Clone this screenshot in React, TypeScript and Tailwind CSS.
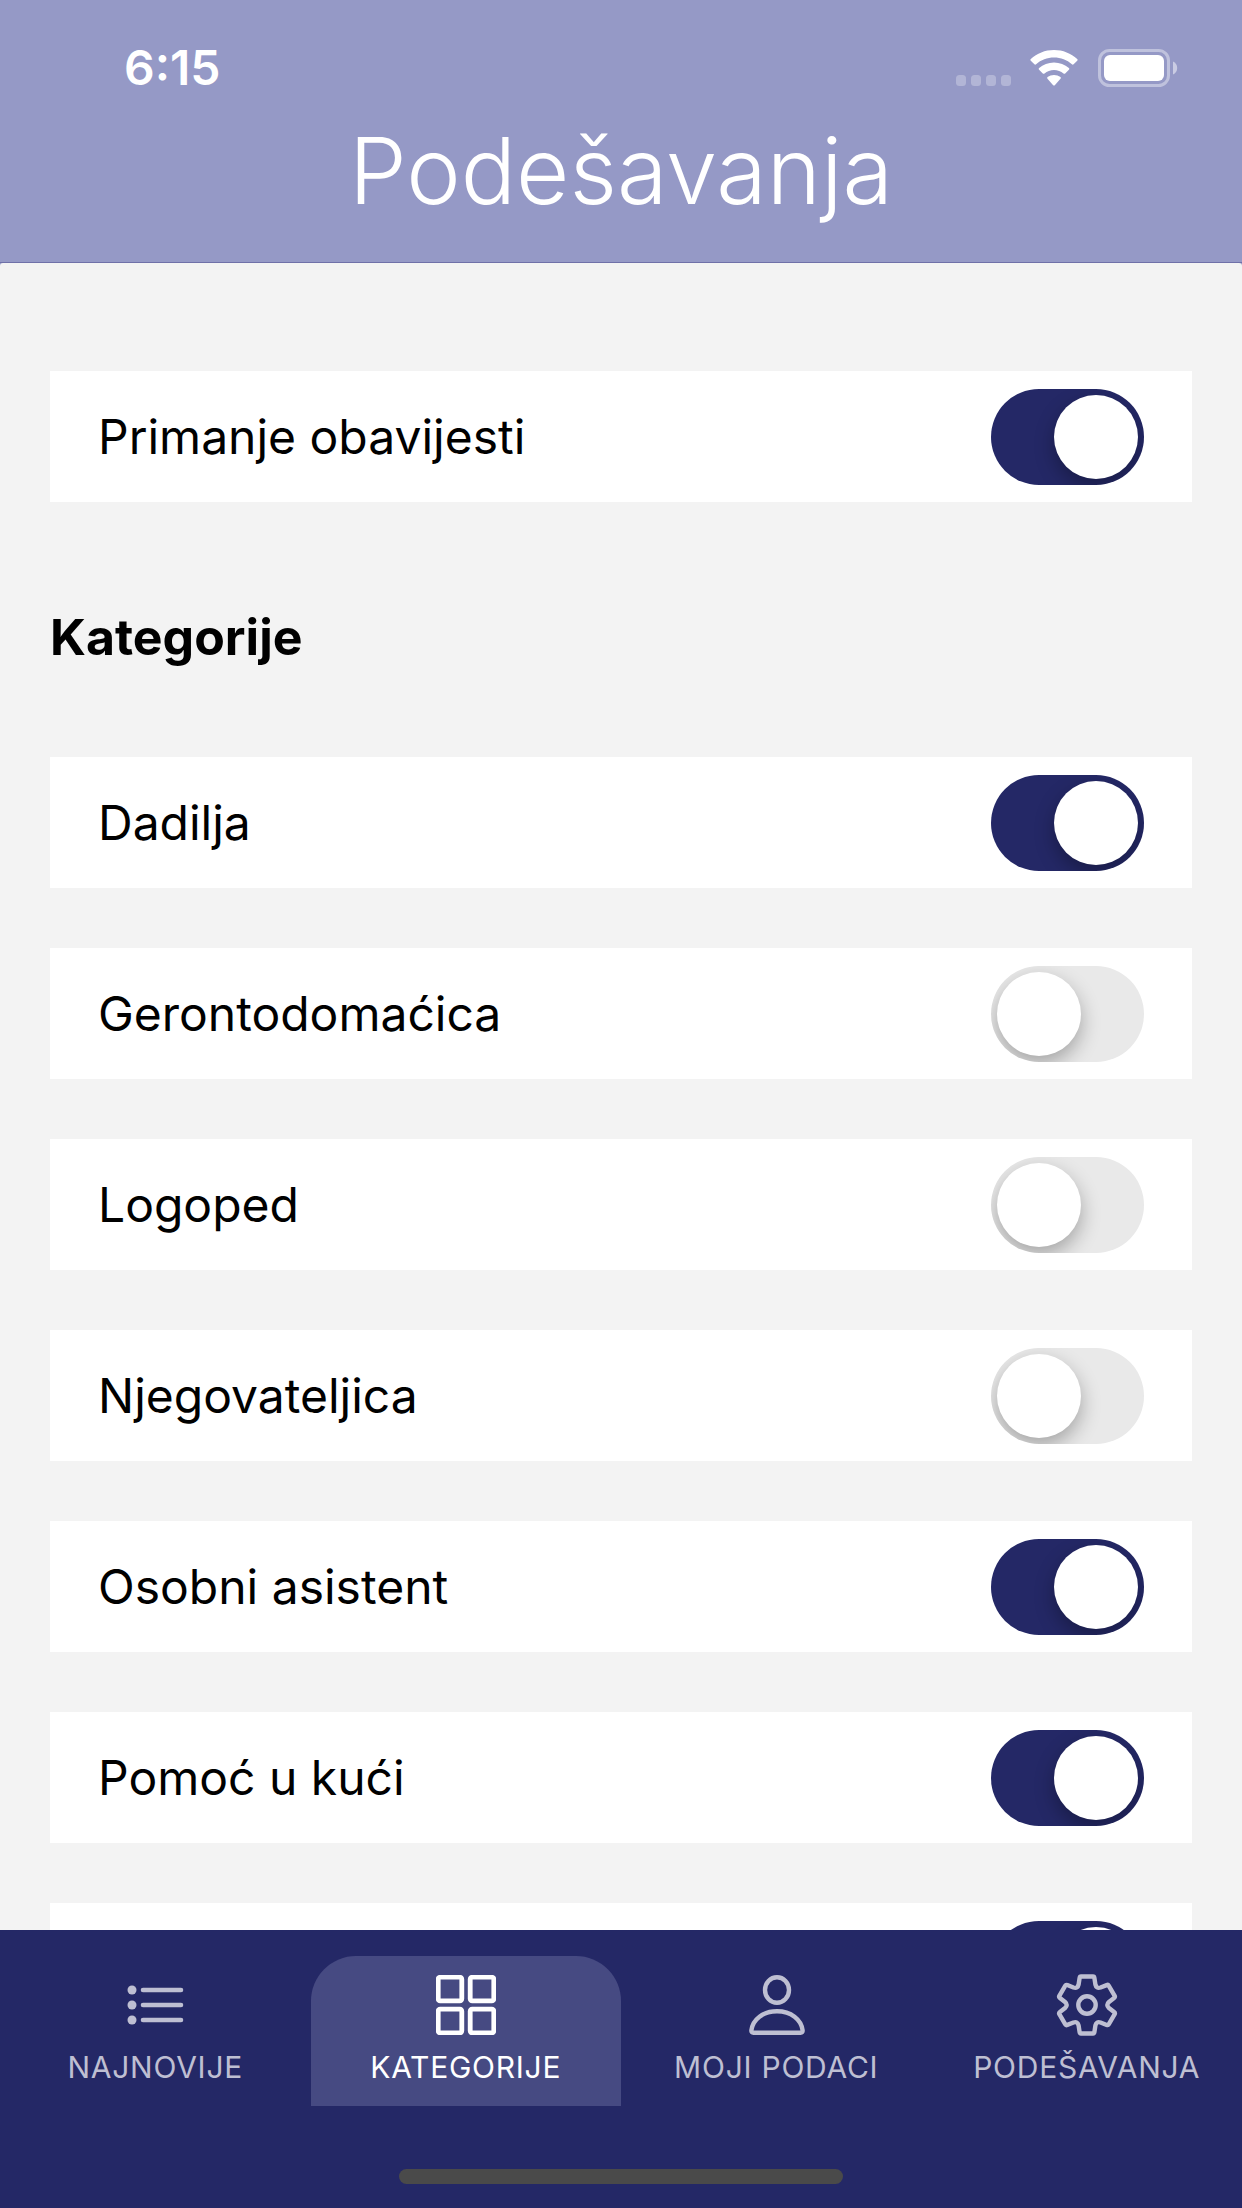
import { useState } from 'react';
import type { ReactNode } from 'react';

interface Category {
  id: string;
  label?: string;
  enabled: boolean;
}

const initialCategories: Category[] = [
  { id: 'dadilja', label: 'Dadilja', enabled: true },
  { id: 'gerontodomacica', label: 'Gerontodomaćica', enabled: false },
  { id: 'logoped', label: 'Logoped', enabled: false },
  { id: 'njegovateljica', label: 'Njegovateljica', enabled: false },
  { id: 'osobni-asistent', label: 'Osobni asistent', enabled: true },
  { id: 'pomoc-u-kuci', label: 'Pomoć u kući', enabled: true },
  { id: 'ostalo', enabled: true },
];

/**
 * Six-toothed gear outline, one tooth rotated around the centre
 */
function gearPath() {
  const point = (x: number, y: number, angle: number) => {
    const a = (angle * Math.PI) / 180;
    const px = 30 + x * Math.cos(a) - y * Math.sin(a);
    const py = 30 + x * Math.sin(a) + y * Math.cos(a);
    return `${px.toFixed(2)} ${py.toFixed(2)}`;
  };
  let d = '';
  for (let angle = 0; angle < 360; angle += 60) {
    d += `${angle === 0 ? 'M' : 'L'}${point(-6, -28.5, angle)}`;
    d += `L${point(6, -28.5, angle)}`;
    d += `Q${point(7.2, -28.5, angle)} ${point(7.4, -27, angle)}`;
    d += `L${point(8.4, -20.5, angle)}`;
    d += `Q${point(9.3, -16.1, angle)} ${point(-8.4, -20.5, angle + 60)}`;
    d += `L${point(-7.4, -27, angle + 60)}`;
    d += `Q${point(-7.2, -28.5, angle + 60)} ${point(-6, -28.5, angle + 60)}`;
  }
  return d + 'Z';
}

function ListIcon() {
  return (
    <svg className="h-[60px] w-[60px]" viewBox="0 0 60 60" fill="none" stroke="currentColor" strokeWidth={4.6} strokeLinecap="round" aria-hidden="true">
      <path d="M18 15h38M18 30h38M18 45h38" />
      <g fill="currentColor" stroke="none">
        <circle cx="7" cy="15" r="4.500" />
        <circle cx="7" cy="30" r="4.500" />
        <circle cx="7" cy="45" r="4.500" />
      </g>
    </svg>
  );
}

function GridIcon() {
  return (
    <svg className="h-[60px] w-[60px]" viewBox="0 0 60 60" fill="none" stroke="currentColor" strokeWidth={4.8} aria-hidden="true">
      <rect x="2.200" y="2.200" width="23.600" height="23.600" rx="2" />
      <rect x="34.200" y="2.200" width="23.600" height="23.600" rx="2" />
      <rect x="2.200" y="34.200" width="23.600" height="23.600" rx="2" />
      <rect x="34.200" y="34.200" width="23.600" height="23.600" rx="2" />
    </svg>
  );
}

function PersonIcon() {
  return (
    <svg className="h-[60px] w-[60px]" viewBox="0 0 60 60" fill="none" stroke="currentColor" strokeWidth={4.4} strokeLinejoin="round" aria-hidden="true">
      <ellipse cx="31" cy="15" rx="12" ry="12.800" />
      <path d="M7.500 57.800c-1.500 0-2.300-1-2.100-2.500C6.800 44.300 17 36.300 31 36.300s24.200 8 25.600 19c.2 1.500-.6 2.500-2.100 2.500z" />
    </svg>
  );
}

function GearIcon() {
  return (
    <svg className="h-[60px] w-[60px] overflow-visible" viewBox="0 0 60 60" fill="none" stroke="currentColor" strokeWidth={4.4} strokeLinejoin="round" aria-hidden="true">
      <path d={gearPath()} />
      <circle cx="30" cy="30" r="8.700" />
    </svg>
  );
}

function StatusIcons() {
  return (
    <div className="flex items-center text-white">
      <svg className="mr-[18px] h-[38px] w-[56px]" viewBox="0 0 56 38" fill="currentColor" opacity={0.28} aria-hidden="true">
        <rect x="0" y="26" width="10" height="11" rx="3.500" />
        <rect x="15" y="26" width="10" height="11" rx="3.500" />
        <rect x="30" y="26" width="10" height="11" rx="3.500" />
        <rect x="45" y="26" width="10" height="11" rx="3.500" />
      </svg>
      <svg className="mr-5 h-[38px] w-12" viewBox="0 0 48 38" fill="currentColor" aria-hidden="true">
        <path d="M24 1C15 1 7 4.400.8 10c-.6.600-.6 1.200 0 1.800l3.600 3.500c.5.500 1.100.5 1.700 0C11 11 17.200 8.600 24 8.600S37 11 41.900 15.300c.6.5 1.200.5 1.700 0l3.600-3.500c.6-.6.6-1.200 0-1.800C41 4.400 33 1 24 1z" />
        <path d="M24 13.400c-5.700 0-10.900 2.100-14.900 5.600-.6.6-.6 1.200 0 1.800l3.700 3.600c.5.500 1.100.5 1.700.1 2.600-2.200 5.900-3.500 9.500-3.500s6.900 1.300 9.500 3.500c.6.4 1.200.4 1.700-.1l3.700-3.600c.6-.6.6-1.200 0-1.800-4-3.500-9.200-5.600-14.900-5.600z" />
        <path d="M24 25.900c-2.400 0-4.600.8-6.400 2.200-.6.500-.6 1.100-.1 1.700l5.700 6.400c.5.500 1.100.5 1.600 0l5.700-6.400c.5-.6.500-1.200-.1-1.700-1.800-1.400-4-2.200-6.400-2.200z" />
      </svg>
      <svg className="h-[38px] w-20" viewBox="0 0 80 38" fill="currentColor" aria-hidden="true">
        <rect x="1.500" y="1.500" width="69" height="35" rx="10" fill="none" stroke="currentColor" strokeWidth={3} opacity={0.4} />
        <rect x="6" y="6" width="60" height="26" rx="6" />
        <path d="M75 12.500c2.500 1.100 4.200 3.500 4.200 6.500s-1.700 5.400-4.200 6.500z" opacity={0.5} />
      </svg>
    </div>
  );
}

interface SwitchRowProps {
  id: string;
  label?: string;
  checked: boolean;
  onChange: (checked: boolean) => void;
}

function SwitchRow({ id, label, checked, onChange }: SwitchRowProps) {
  return (
    <div className="flex h-[131px] shrink-0 items-center bg-white px-12">
      {label && (
        <label htmlFor={id} className="text-[48px] leading-[60px]">
          {label}
        </label>
      )}
      <input
        id={id}
        type="checkbox"
        role="switch"
        aria-label={label ? undefined : 'Ostalo'}
        checked={checked}
        onChange={(e) => onChange(e.target.checked)}
        className="ml-auto flex h-24 w-[153px] shrink-0 cursor-pointer appearance-none items-center overflow-hidden rounded-full bg-[#e9e9e9] px-1.5 before:h-[84px] before:w-[84px] before:rounded-full before:bg-white before:shadow-[0_8px_20px_rgba(0,0,0,0.3)] before:content-[''] checked:justify-end checked:bg-[#242866]"
      />
    </div>
  );
}

interface TabProps {
  label: string;
  icon: ReactNode;
  active?: boolean;
}

function Tab({ label, icon, active = false }: TabProps) {
  return (
    <a
      href="#"
      aria-current={active ? 'page' : undefined}
      className={`flex min-w-0 flex-1 flex-col items-center gap-3.5 rounded-t-[45px] pt-[19px] pb-[21px] ${
        active ? 'bg-[#464a82] text-white' : 'text-[#bebfd2]'
      }`}
    >
      {icon}
      <span className="text-[30px] leading-9 tracking-wide whitespace-nowrap">{label}</span>
    </a>
  );
}

export default function App() {
  const [notifications, setNotifications] = useState(true);
  const [categories, setCategories] = useState(initialCategories);

  const toggleCategory = (id: string, enabled: boolean) => {
    setCategories((prev) => prev.map((c) => (c.id === id ? { ...c, enabled } : c)));
  };

  return (
    <div className="flex h-screen flex-col bg-[#9599c6] font-['Inter','Liberation_Sans',sans-serif] text-black">
      <header className="shrink-0 border-b border-[#6f70a8] pt-[38px] pb-[31px] text-white">
        {/* Status bar */}
        <div className="flex h-[60px] items-center justify-between pr-16 pl-[124px]">
          <span className="text-[48px] leading-[60px] font-semibold">6:15</span>
          <StatusIcons />
        </div>
        <h1 className="mt-[13px] text-center text-[92px] leading-[120px] font-[350]">Podešavanja</h1>
      </header>

      <main className="min-h-0 flex-1 overflow-y-auto rounded-t-[3px] bg-[#f3f3f3] px-[50px] pt-[108px] [scrollbar-width:none]">
        <SwitchRow id="obavijesti" label="Primanje obavijesti" checked={notifications} onChange={setNotifications} />

        <h2 className="mt-[105px] mb-[90px] text-[50px] leading-[60px] font-bold">Kategorije</h2>

        <div className="flex flex-col gap-[60px]">
          {categories.map((category) => (
            <SwitchRow
              key={category.id}
              id={category.id}
              label={category.label}
              checked={category.enabled}
              onChange={(enabled) => toggleCategory(category.id, enabled)}
            />
          ))}
        </div>
      </main>

      {/* Bottom navigation */}
      <nav className="flex shrink-0 flex-col bg-[#242866] pt-[26px] pb-6">
        <div className="flex">
          <Tab label="NAJNOVIJE" icon={<ListIcon />} />
          <Tab label="KATEGORIJE" icon={<GridIcon />} active />
          <Tab label="MOJI PODACI" icon={<PersonIcon />} />
          <Tab label="PODEŠAVANJA" icon={<GearIcon />} />
        </div>
        <div className="mt-[63px] h-[15px] w-[444px] self-center rounded-full bg-[#4a4a4a]" />
      </nav>
    </div>
  );
}
